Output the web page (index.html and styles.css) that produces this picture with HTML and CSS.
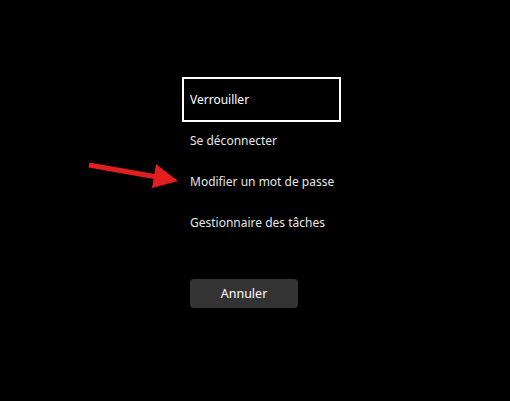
FILE: index.html
```html
<!DOCTYPE html>
<html lang="fr">
<head>
<meta charset="utf-8">
<link rel="stylesheet" href="styles.css">
</head>
<body>
<main class="screen">
  <nav class="menu">
    <div class="item focused">Verrouiller</div>
    <div class="item">Se déconnecter</div>
    <div class="item">Modifier un mot de passe</div>
    <div class="item">Gestionnaire des tâches</div>
  </nav>
  <div class="actions">
    <button class="cancel">Annuler</button>
  </div>
  <svg class="arrow" width="100" height="40" viewBox="0 0 100 40">
    <line x1="4" y1="10" x2="72" y2="22" stroke="#e31e1e" stroke-width="5"/>
    <polygon points="71,9 93,26 67,33" fill="#e31e1e"/>
  </svg>
</main>
</body>
</html>
```
FILE: styles.css
```css
* { box-sizing: border-box; }
html, body { margin: 0; padding: 0; background: #000; }
.screen {
  position: relative;
  width: 510px;
  height: 401px;
  background: #000;
  font-family: "Noto Sans", "Open Sans", sans-serif;
  font-size: 12px;
  color: #e6e6e6;
  padding: 79px 0 0 184px;
}
.menu {
  display: flex;
  flex-direction: column;
  width: 155px;
}
.item {
  height: 41px;
  display: flex;
  align-items: center;
  padding-left: 6px;
  white-space: nowrap;
}
.item.focused {
  outline: 2px solid #fff;
  outline-offset: 0;
  color: #fff;
}
.actions {
  margin-top: 36px;
  padding-left: 6px;
}
.cancel {
  width: 108px;
  height: 29px;
  border: none;
  border-radius: 4px;
  background: #333;
  color: #fff;
  font-family: inherit;
  font-size: 12.5px;
  padding: 0;
}
.arrow {
  position: absolute;
  left: 85px;
  top: 155px;
}
```
